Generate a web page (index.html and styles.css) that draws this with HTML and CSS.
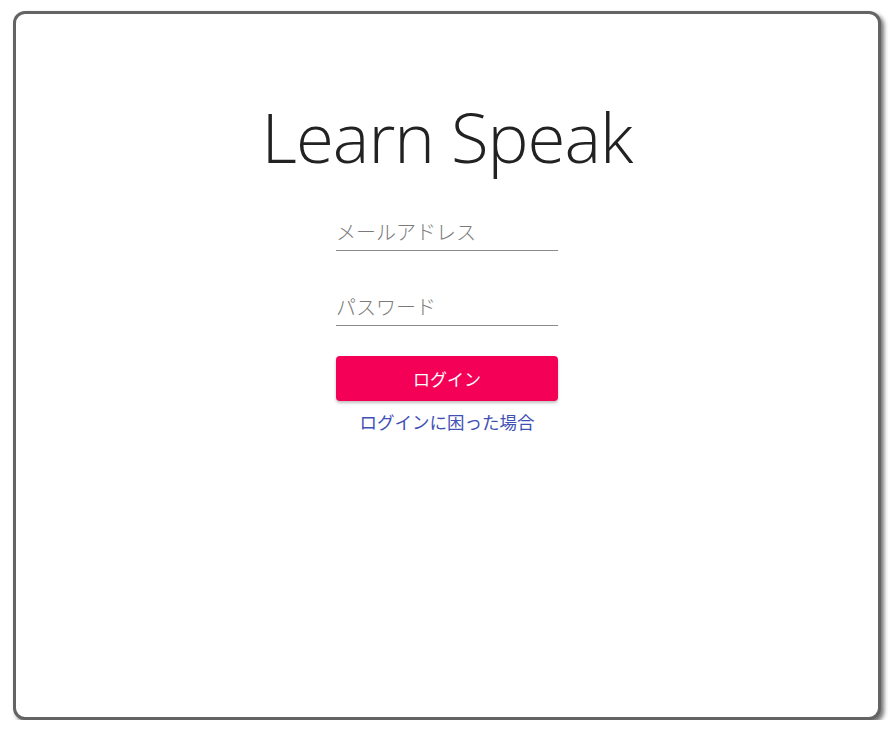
FILE: index.html
```html
<!DOCTYPE html>
<html lang="ja">
<head>
<meta charset="utf-8">
<link rel="stylesheet" href="styles.css">
</head>
<body>
<div class="card">
  <h1 class="title">Learn Speak</h1>
  <form class="form">
    <div class="field"><input class="input" type="text" placeholder="メールアドレス"></div>
    <div class="field"><input class="input" type="password" placeholder="パスワード"></div>
    <button class="btn" type="button">ログイン</button>
    <a class="link" href="#">ログインに困った場合</a>
  </form>
</div>
</body>
</html>
```
FILE: styles.css
```css
html, body { margin: 0; padding: 0; background: #fff; }
body { padding: 11px 13px 0 13px; font-family: "Noto Sans CJK JP", "Noto Sans", sans-serif; }
.card {
  box-sizing: border-box;
  width: 868px;
  height: 709px;
  border: 3px solid #646464;
  border-radius: 12px;
  box-shadow: 3px 3px 4px rgba(0,0,0,0.55);
  background: #fff;
  display: flex;
  flex-direction: column;
  align-items: center;
}
.title {
  margin: 80px 0 0 0;
  font-family: "Open Sans", sans-serif;
  font-weight: 300;
  font-size: 69px;
  line-height: 84px;
  color: #222;
  letter-spacing: -1px;
}
.form { display: flex; flex-direction: column; width: 222px; margin-top: 36px; }
.field { height: 36px; border-bottom: 1px solid #8a8a8a; margin-bottom: 38px; }
.field:nth-child(2) { margin-bottom: 30px; }
.input {
  border: none; outline: none; width: 100%; height: 34px; padding: 0;
  font-family: "Noto Sans CJK JP", sans-serif; font-size: 20px; color: #333; background: transparent;
}
.input::placeholder { color: #7a7a7a; font-weight: 300; }
.btn {
  height: 45px; border: none; border-radius: 4px; background: #f50057; color: #fff;
  font-family: "Noto Sans CJK JP", sans-serif; font-size: 17px;
  box-shadow: 0 2px 3px rgba(0,0,0,0.25);
}
.link {
  margin-top: 9px; margin-left: -20px; margin-right: -20px; text-align: center; color: #3f51b5; text-decoration: none;
  font-size: 17.5px; line-height: 24px;
}
```
